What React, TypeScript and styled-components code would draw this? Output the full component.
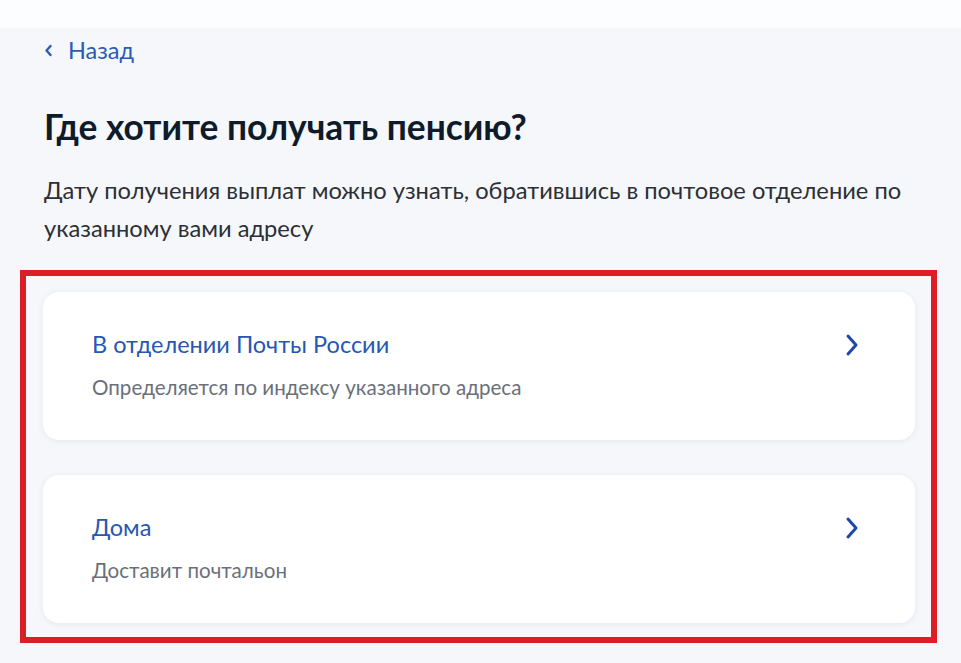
import React from 'react';
import styled, { createGlobalStyle } from 'styled-components';

interface Option {
  title: string;
  hint: string;
}

const options: Option[] = [
  { title: 'В отделении Почты России', hint: 'Определяется по индексу указанного адреса' },
  { title: 'Дома', hint: 'Доставит почтальон' }
];

const GlobalStyle = createGlobalStyle`
  html, body {
    margin: 0;
    padding: 0;
    background: #f5f7fa;
    font-family: Lato, 'Noto Sans', 'Liberation Sans', sans-serif;
  }
`;

const Page = styled.div`
  min-height: 663px;
  background: #f5f7fa;
`;

const TopStrip = styled.div`
  height: 28px;
  background: #fcfdfe;
`;

const Content = styled.div`
  padding: 0 24px 0 20px;
`;

const Header = styled.div`
  padding: 8px 0 0 24px;
`;

const BackLink = styled.a`
  display: inline-flex;
  align-items: center;
  gap: 15px;
  height: 28px;
  font-size: 23.5px;
  line-height: 28px;
  color: #2a5bb5;
  text-decoration: none;
  cursor: pointer;
`;

const Title = styled.h1`
  margin: 41px 0 0;
  font-size: 35.3px;
  line-height: 44px;
  font-weight: 700;
  color: #0f1a2b;
`;

const Lead = styled.p`
  margin: 22px 0 0;
  max-width: 872px;
  font-size: 23.7px;
  line-height: 38px;
  color: #2c2f35;
`;

const Highlight = styled.div`
  margin-top: 23px;
  width: 917px;
  box-sizing: border-box;
  border: 6px solid #dc1f27;
  padding: 16px 16px 14px 17px;
  display: flex;
  flex-direction: column;
  gap: 35px;
`;

const Card = styled.div`
  display: flex;
  align-items: flex-start;
  justify-content: space-between;
  height: 148px;
  box-sizing: border-box;
  padding: 37px 55px 0 49px;
  background: #ffffff;
  border-radius: 16px;
  box-shadow: 0 1px 6px rgba(40, 60, 100, 0.08);
  cursor: pointer;
`;

const CardText = styled.div`
  display: flex;
  flex-direction: column;
  gap: 15px;
`;

const CardTitle = styled.div`
  font-size: 23.5px;
  line-height: 30px;
  color: #2557b3;
`;

const CardHint = styled.div`
  font-size: 20.6px;
  line-height: 26px;
  color: #6b7078;
`;

const Arrow = styled.svg`
  margin-top: 4px;
  flex: none;
`;

function Chevron ({ dir }: { dir: 'left' | 'right' }): React.ReactElement {
  if (dir === 'left') {
    return (
      <svg width='9' height='13' viewBox='0 0 9 13'>
        <path d='M6.5 2 L2.5 6.5 L6.5 11' fill='none' stroke='#2a5bb5' strokeWidth='2.4' strokeLinecap='round' strokeLinejoin='round' />
      </svg>
    );
  }

  return (
    <Arrow width='16' height='24' viewBox='0 0 16 24'>
      <path d='M4 3 L12 12 L4 21' fill='none' stroke='#1d48a6' strokeWidth='3' strokeLinecap='round' strokeLinejoin='round' />
    </Arrow>
  );
}

export default function App (): React.ReactElement {
  return (
    <Page>
      <GlobalStyle />
      <TopStrip />
      <Content>
        <Header>
          <BackLink>
            <Chevron dir='left' />
            Назад
          </BackLink>
          <Title>Где хотите получать пенсию?</Title>
          <Lead>
            Дату получения выплат можно узнать, обратившись в почтовое отделение по указанному вами адресу
          </Lead>
        </Header>
        <Highlight>
          {options.map((option) => (
            <Card key={option.title}>
              <CardText>
                <CardTitle>{option.title}</CardTitle>
                <CardHint>{option.hint}</CardHint>
              </CardText>
              <Chevron dir='right' />
            </Card>
          ))}
        </Highlight>
      </Content>
    </Page>
  );
}
